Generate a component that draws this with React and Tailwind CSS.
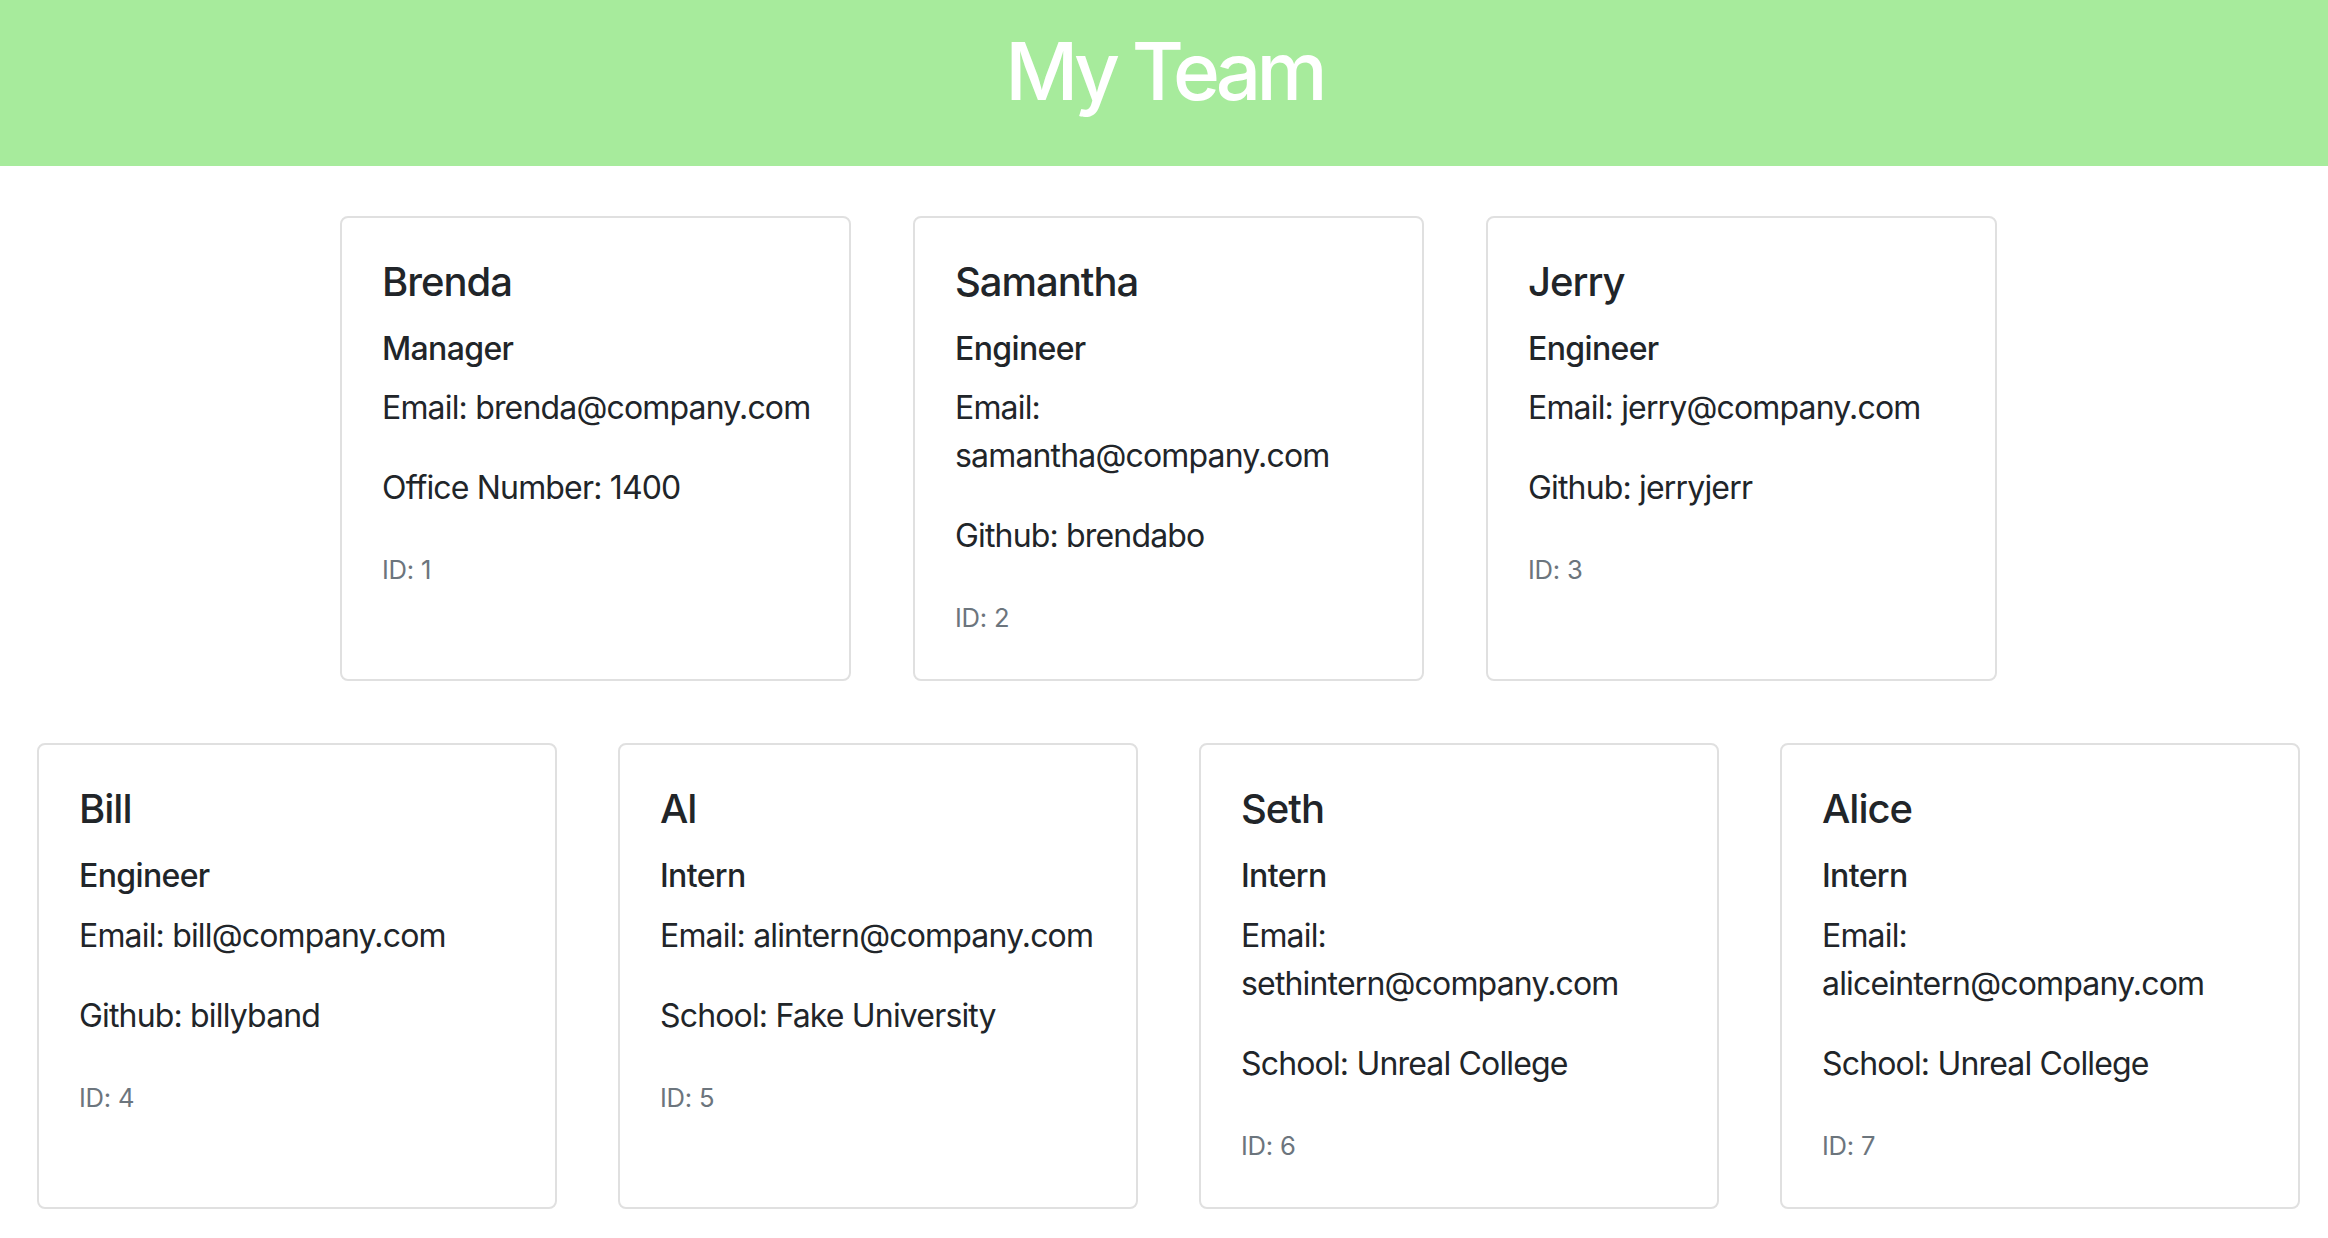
import React from "react";

const top = [
  { name: "Brenda", role: "Manager", email: "brenda@company.com", extra: "Office Number: 1400", id: 1, wrap: false },
  { name: "Samantha", role: "Engineer", email: "samantha@company.com", extra: "Github: brendabo", id: 2, wrap: true },
  { name: "Jerry", role: "Engineer", email: "jerry@company.com", extra: "Github: jerryjerr", id: 3, wrap: false },
];

const bottom = [
  { name: "Bill", role: "Engineer", email: "bill@company.com", extra: "Github: billyband", id: 4, wrap: false },
  { name: "Al", role: "Intern", email: "alintern@company.com", extra: "School: Fake University", id: 5, wrap: false },
  { name: "Seth", role: "Intern", email: "sethintern@company.com", extra: "School: Unreal College", id: 6, wrap: true },
  { name: "Alice", role: "Intern", email: "aliceintern@company.com", extra: "School: Unreal College", id: 7, wrap: true },
];

function Card({ m, wide }) {
  return (
    <div
      className={
        (wide ? "w-[520px] " : "w-[511px] ") +
        "shrink-0 rounded-[8px] border-2 border-[#e0e0e0] bg-white px-[40px] pt-[40px] pb-[37px] text-[#212529]"
      }
    >
      <h5 className="text-[40px] leading-[48px] font-medium tracking-[-0.025em] mb-[24px]">{m.name}</h5>
      <h6 className="text-[32px] leading-[38.4px] font-medium tracking-[-0.02em] mb-[16px]">{m.role}</h6>
      {m.wrap ? (
        <p className="text-[32px] leading-[48px] tracking-[-0.026em] mb-[32px]">
          Email:
          <br />
          {m.email}
        </p>
      ) : (
        <p className="text-[32px] leading-[48px] tracking-[-0.026em] mb-[32px] whitespace-nowrap">
          Email: {m.email}
        </p>
      )}
      <p className="text-[32px] leading-[48px] tracking-[-0.026em] mb-[32px] whitespace-nowrap">{m.extra}</p>
      <p className="text-[32px] leading-[48px]">
        <small className="text-[25.6px] text-[#6c757d] tracking-[-0.01em]">ID: {m.id}</small>
      </p>
    </div>
  );
}

export default function App() {
  return (
    <div className="min-h-[1238px] bg-white" style={{ fontFamily: "Inter, 'Noto Sans', sans-serif" }}>
      <header className="h-[166px] bg-[#a7eb9c] pt-[23px] text-center">
        <h1 className="text-[80px] leading-[96px] font-medium text-white tracking-[-0.06em]">My Team</h1>
      </header>
      <main className="pl-[9px] pt-[50px]">
        <div className="flex justify-center gap-[62px]">
          {top.map((m) => (
            <Card key={m.id} m={m} />
          ))}
        </div>
        <div className="mt-[62px] flex justify-center gap-[61px]">
          {bottom.map((m) => (
            <Card key={m.id} m={m} wide />
          ))}
        </div>
      </main>
    </div>
  );
}
